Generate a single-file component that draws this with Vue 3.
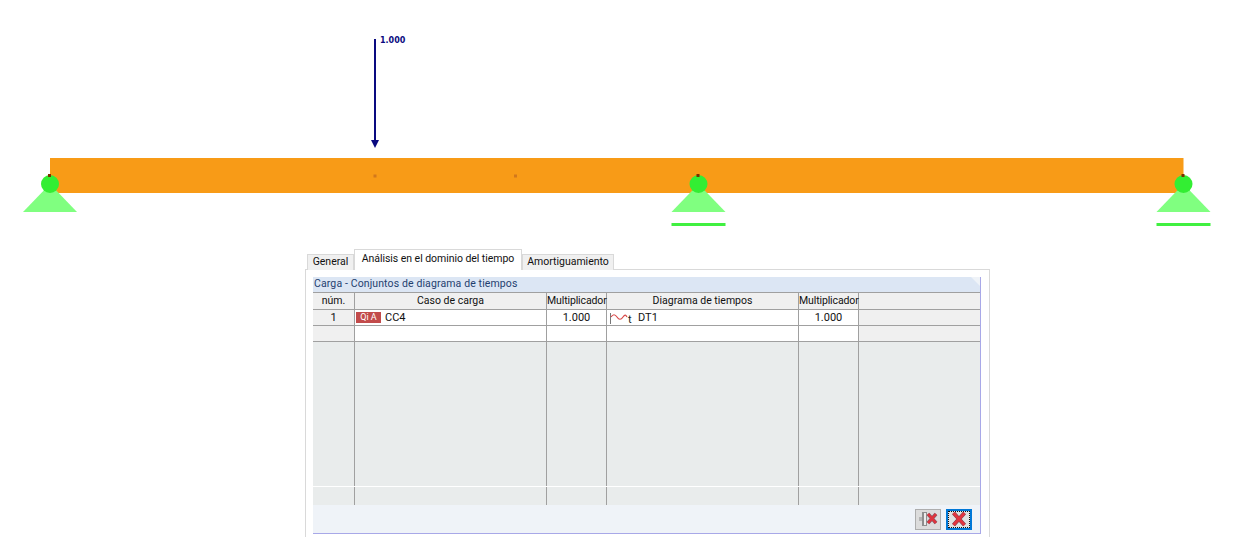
<template>
  <div class="page">
    <svg class="model" width="1241" height="240" viewBox="0 0 1241 240">
      <rect x="50" y="158" width="1133.500" height="35" fill="#f89b17" />
      <rect x="373.500" y="174.500" width="3" height="3" fill="#d2781c" />
      <rect x="514" y="174.500" width="3" height="3" fill="#d2781c" />

      <line x1="375" y1="39" x2="375" y2="141" stroke="#0a0a80" stroke-width="2" />
      <path d="M371 140h8l-4 8z" fill="#0a0a80" />
      <text x="380" y="43" class="load-label">1.000</text>

      <g v-for="s in supports" :key="s.x">
        <path :d="`M${s.x} 184L${s.x + 27} 212H${s.x - 27}Z`" fill="#80ff80" />
        <rect v-if="s.roller" :x="s.x - 27" y="223" width="54" height="3" fill="#40f040" />
        <circle :cx="s.x" cy="184" r="9" fill="#33ee33" />
        <rect :x="s.x - 2" y="174" width="3" height="3" fill="#7a3000" />
      </g>
    </svg>

    <div class="dialog">
      <div class="tabs">
        <div
          v-for="tab in tabs"
          :key="tab.name"
          class="tab"
          :class="{ active: tab.active }"
          :style="{ width: tab.width + 'px' }"
        >
          {{ tab.name }}
        </div>
      </div>

      <div class="tab-body">
        <div class="group">
          <div class="group-title">Carga - Conjuntos de diagrama de tiempos</div>

          <div class="grid">
            <div class="row head">
              <div class="cell c-num">núm.</div>
              <div class="cell c-case">Caso de carga</div>
              <div class="cell c-mult tight">Multiplicador</div>
              <div class="cell c-diag">Diagrama de tiempos</div>
              <div class="cell c-mult tight">Multiplicador</div>
              <div class="cell c-rest"></div>
            </div>

            <div class="row data">
              <div class="cell c-num gray">1</div>
              <div class="cell c-case left">
                <span class="badge">Qi A</span>
                <span>CC4</span>
              </div>
              <div class="cell c-mult">1.000</div>
              <div class="cell c-diag left">
                <svg class="diagram-icon" width="28" height="14" viewBox="0 0 28 14">
                  <path d="M1.500 2v11" stroke="#777" fill="none" />
                  <path d="M2 6c2-3 4-3 6 0s4 3 6 0 3-2 4 0" stroke="#d84848" stroke-width="1.200" fill="none" />
                  <text x="19" y="12" class="icon-t">t</text>
                </svg>
                <span>DT1</span>
              </div>
              <div class="cell c-mult">1.000</div>
              <div class="cell c-rest gray"></div>
            </div>

            <div class="row data">
              <div class="cell c-num gray"></div>
              <div class="cell c-case"></div>
              <div class="cell c-mult"></div>
              <div class="cell c-diag"></div>
              <div class="cell c-mult"></div>
              <div class="cell c-rest gray"></div>
            </div>

            <div class="row empty tall">
              <div class="cell c-num"></div>
              <div class="cell c-case"></div>
              <div class="cell c-mult"></div>
              <div class="cell c-diag"></div>
              <div class="cell c-mult"></div>
              <div class="cell c-rest"></div>
            </div>

            <div class="row empty short">
              <div class="cell c-num"></div>
              <div class="cell c-case"></div>
              <div class="cell c-mult"></div>
              <div class="cell c-diag"></div>
              <div class="cell c-mult"></div>
              <div class="cell c-rest"></div>
            </div>
          </div>

          <div class="toolbar">
            <button class="tool-btn">
              <svg width="22" height="18" viewBox="0 0 22 18">
                <path d="M2 7h5v4H2z" fill="#b4b4b4" />
                <path d="M5 2h5v14H5z" fill="#8e8e8e" />
                <path d="M7 3h2v12H7z" fill="#ececec" />
                <path d="M11 4l8 9M19 4l-8 9" stroke="#8a5a66" stroke-width="3.600" fill="none" />
                <path d="M11 4l8 9M19 4l-8 9" stroke="#e0333c" stroke-width="2.400" fill="none" />
              </svg>
            </button>
            <button class="tool-btn focused">
              <span class="focus-dots">
                <svg width="16" height="14" viewBox="0 0 16 14">
                  <path d="M2.500 1l11 12M13.500 1l-11 12" stroke="#80404e" stroke-width="4" fill="none" />
                  <path d="M2.500 1l11 12M13.500 1l-11 12" stroke="#e2343f" stroke-width="2.800" fill="none" />
                </svg>
              </span>
            </button>
          </div>
        </div>
      </div>
    </div>
  </div>
</template>

<script setup>
const supports = [
  { x: 50, roller: false },
  { x: 698.500, roller: true },
  { x: 1183.500, roller: true },
];

const tabs = [
  { name: 'General', width: 47 },
  { name: 'Análisis en el dominio del tiempo', width: 168, active: true },
  { name: 'Amortiguamiento', width: 92 },
];
</script>

<style>
html,
body {
  background: #fff;
}
</style>

<style scoped>
.page {
  width: 1241px;
  height: 558px;
  overflow: hidden;
  background: #fff;
  font-family: Roboto, "Liberation Sans", sans-serif;
  font-size: 10.500px;
  color: #111;
}

.model {
  display: block;
}

.load-label {
  font-family: "DejaVu Sans", sans-serif;
  font-size: 8px;
  font-weight: 700;
  fill: #0a0a80;
}

.dialog {
  width: 685px;
  margin: 9px 0 0 305px;
}

.tabs {
  display: flex;
  align-items: flex-end;
  height: 21px;
  padding-left: 2px;
  position: relative;
  z-index: 1;
  margin-bottom: -1px;
}

.tab {
  height: 16px;
  line-height: 14px;
  background: #f0f0f0;
  border: 1px solid #d9d9d9;
  border-bottom: none;
  box-sizing: border-box;
  text-align: center;
  white-space: nowrap;
}

.tab.active {
  height: 21px;
  line-height: 18px;
  background: #fff;
  letter-spacing: -0.05px;
}

.tab-body {
  height: 268px;
  box-sizing: border-box;
  border: 1px solid #d9d9d9;
  border-bottom: none;
  padding: 7px 8px 0 7px;
}

.group {
  height: 257px;
  box-sizing: border-box;
  border-right: 1px solid #a8a8e8;
  border-bottom: 1px solid #a8a8e8;
  display: flex;
  flex-direction: column;
  background: #eff3f8;
}

.group-title {
  height: 15px;
  line-height: 14px;
  padding-left: 1px;
  background: #dce6f4;
  color: #1f3f6f;
  letter-spacing: 0.12px;
  clip-path: polygon(0 0, calc(100% - 9px) 0, 100% 9px, 100% 100%, 0 100%);
}

.grid {
  display: flex;
  flex-direction: column;
}

.row {
  display: flex;
  box-sizing: border-box;
  border-bottom: 1px solid #a0a0a0;
}

.row.head {
  height: 18px;
  background: #f0f0f0;
  border-top: 1px solid #a0a0a0;
}

.row.data {
  height: 16px;
  background: #fff;
  font-size: 11px;
}

.row.empty {
  background: #e9ecec;
  border-bottom: none;
}

.row.tall {
  height: 145px;
  border-bottom: 1px solid #fff;
}

.row.short {
  height: 18px;
}

.cell {
  box-sizing: border-box;
  height: 100%;
  border-right: 1px solid #a0a0a0;
  text-align: center;
  line-height: 15px;
  white-space: nowrap;
}

.cell.left {
  display: flex;
  align-items: center;
  text-align: left;
}

.cell.gray {
  background: #f0f0f0;
}

.tight {
  letter-spacing: -0.12px;
}

.c-num {
  width: 42px;
}

.c-case {
  width: 192px;
}

.c-mult {
  width: 60px;
}

.c-diag {
  width: 192px;
}

.c-rest {
  flex: 1;
  border-right: none;
}

.badge {
  width: 25px;
  height: 11px;
  margin: 0 4px 0 1px;
  background: #c24b4b;
  color: #fff;
  font-size: 9px;
  line-height: 11px;
  text-align: center;
}

.diagram-icon {
  flex: none;
  margin-left: 2px;
  margin-right: 1px;
}

.icon-t {
  font-size: 11px;
  fill: #222;
}

.toolbar {
  flex: 1;
  display: flex;
  justify-content: flex-end;
  align-items: center;
  gap: 5px;
  padding: 0 8px 0 0;
}

.tool-btn {
  width: 26px;
  height: 21px;
  padding: 0;
  display: flex;
  align-items: center;
  justify-content: center;
  background: #dcdcdc;
  border: 1px solid #adadad;
  box-sizing: border-box;
}

.tool-btn.focused {
  border: 2px solid #0078d7;
  background: #e1e1e1;
}

.focus-dots {
  width: 20px;
  height: 15px;
  display: flex;
  align-items: center;
  justify-content: center;
  border: 1px dotted #111;
}
</style>
